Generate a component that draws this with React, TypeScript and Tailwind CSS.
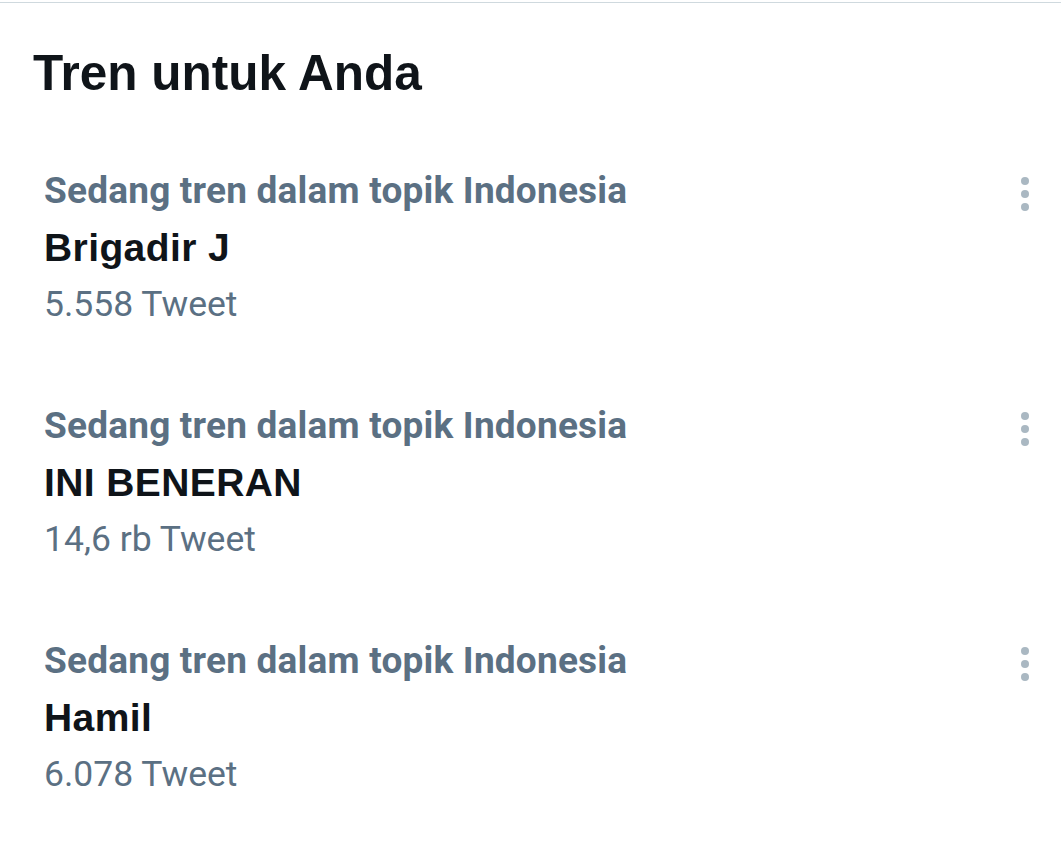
const trends = [
  { category: "Sedang tren dalam topik Indonesia", name: "Brigadir J", count: "5.558 Tweet" },
  { category: "Sedang tren dalam topik Indonesia", name: "INI BENERAN", count: "14,6 rb Tweet" },
  { category: "Sedang tren dalam topik Indonesia", name: "Hamil", count: "6.078 Tweet" },
];

const MoreDots = () => (
  <div className="flex flex-col items-center gap-[5px] pt-[15px]">
    <span className="block w-[8px] h-[8px] rounded-full bg-[#aab8c2]" />
    <span className="block w-[8px] h-[8px] rounded-full bg-[#aab8c2]" />
    <span className="block w-[8px] h-[8px] rounded-full bg-[#aab8c2]" />
  </div>
);

export default function App() {
  return (
    <div className="w-[1061px] h-[844px] bg-white overflow-hidden">
      <div className="mt-[2px] h-[1px] bg-[#cfd9de]" />

      {/* Judul */}
      <h2 className="mt-[40px] pl-[33px] text-[49.5px] leading-[60px] font-bold text-[#0f1419] font-['Liberation_Sans',Arial,sans-serif]">
        Tren untuk Anda
      </h2>

      {/* Daftar tren */}
      <div className="mt-[59px] flex flex-col gap-[64px]">
        {trends.map((t) => (
          <div key={t.name} className="flex items-start justify-between pl-[44px] pr-[32px]">
            <div className="flex flex-col">
              <span className="text-[37px] leading-[57px] font-bold text-[#5b7083] tracking-[0.2px] font-['Roboto',sans-serif]">
                {t.category}
              </span>
              <span className="text-[39px] leading-[57px] font-bold text-[#0f1419] tracking-[0.4px] font-['Liberation_Sans',Arial,sans-serif]">
                {t.name}
              </span>
              <span className="text-[35.5px] leading-[57px] text-[#5b7083] font-['Roboto',sans-serif]">
                {t.count}
              </span>
            </div>
            <MoreDots />
          </div>
        ))}
      </div>
    </div>
  );
}
